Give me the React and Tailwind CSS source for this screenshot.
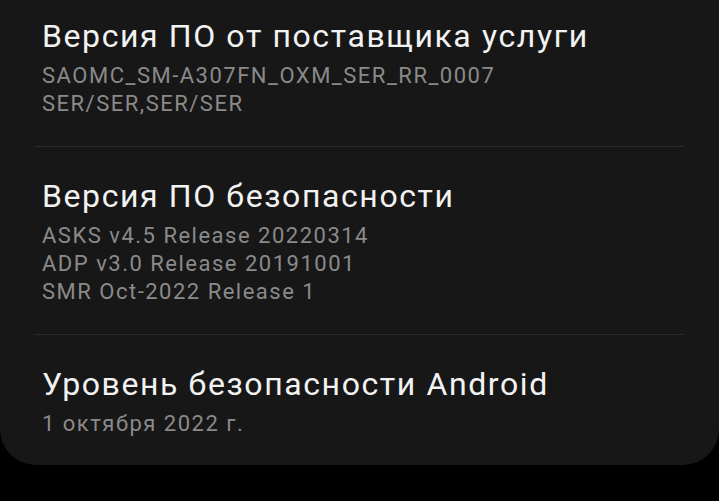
const sections = [
  {
    title: "Версия ПО от поставщика услуги",
    lines: ["SAOMC_SM-A307FN_OXM_SER_RR_0007", "SER/SER,SER/SER"],
  },
  {
    title: "Версия ПО безопасности",
    lines: [
      "ASKS v4.5 Release 20220314",
      "ADP v3.0 Release 20191001",
      "SMR Oct-2022 Release 1",
    ],
  },
  {
    title: "Уровень безопасности Android",
    lines: ["1 октября 2022 г."],
  },
];

const InfoItem = ({ title, lines, first, last }) => (
  <div
    className={`px-[42px] ${first ? "pt-[18px]" : "pt-[31px]"} ${
      last ? "pb-[27px]" : "pb-[28px]"
    }`}
  >
    <div className="text-[32px] leading-[36px] tracking-[1.6px] text-[#f2f2f2]">
      {title}
    </div>
    <div className="mt-[8px] text-[22px] leading-[28px] tracking-[1.5px] text-[#8a8a8a]">
      {lines.map((line) => (
        <div key={line}>{line}</div>
      ))}
    </div>
  </div>
);

export default function App() {
  return (
    <div
      className="w-[719px] h-[501px] bg-black overflow-hidden"
      style={{ fontFamily: "Roboto, 'Noto Sans', sans-serif" }}
    >
      <div className="bg-[#171717] rounded-b-[36px]">
        {sections.map((s, i) => (
          <div key={s.title}>
            {i > 0 && <div className="mx-[35px] h-px bg-[#2c2c2c]" />}
            <InfoItem
              title={s.title}
              lines={s.lines}
              first={i === 0}
              last={i === sections.length - 1}
            />
          </div>
        ))}
      </div>
    </div>
  );
}
